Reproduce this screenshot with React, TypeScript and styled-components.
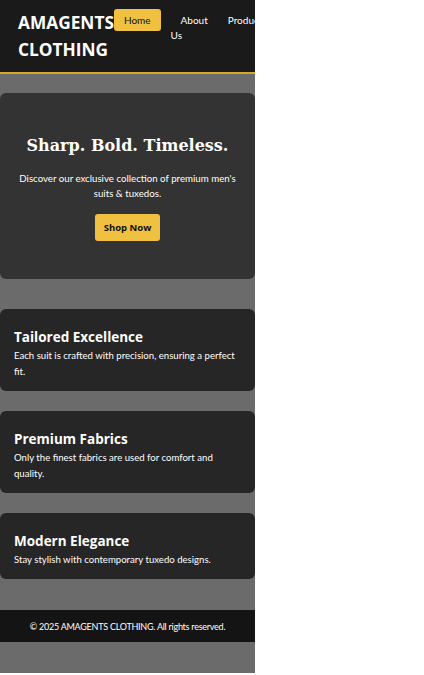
import React from "react";
import styled, { createGlobalStyle } from "styled-components";

const Global = createGlobalStyle`
  html, body { margin: 0; padding: 0; background: #ffffff; }
  body { font-family: Lato, "Open Sans", sans-serif; }
`;

const Page = styled.div`
  width: 255px;
  min-height: 673px;
  background: #6b6b6b;
  overflow: hidden;
  color: #ffffff;
  display: flex;
  flex-direction: column;
`;

const Header = styled.header`
  display: flex;
  align-items: flex-start;
  padding: 9px 0 9px 18px;
  background: #1a1a1a;
  border-bottom: 2px solid #d4a82c;
`;

const Logo = styled.h1`
  margin: 0;
  font-family: "Open Sans", sans-serif;
  font-size: 17.3px;
  line-height: 27px;
  font-weight: 700;
  color: #ffffff;
`;

const NavList = styled.ul`
  display: flex;
  gap: 10px;
  list-style: none;
  margin: 0;
  padding: 4px 0 0;
`;

const NavItem = styled.li`
  font-size: 10px;
  line-height: 15px;
`;

const NavLink = styled.a<{ $active?: boolean }>`
  padding: 5px 10px;
  border-radius: 3px;
  text-decoration: none;
  color: ${(p) => (p.$active ? "#111111" : "#ffffff")};
  background: ${(p) => (p.$active ? "#f0c040" : "transparent")};
`;

const Main = styled.main`
  display: flex;
  flex-direction: column;
  padding-top: 19px;
`;

const Hero = styled.section`
  display: flex;
  flex-direction: column;
  align-items: center;
  padding: 43px 16px 38px;
  background: #333333;
  border-radius: 6px;
  text-align: center;
  margin-bottom: 30px;
`;

const HeroTitle = styled.h2`
  margin: 0;
  font-family: "DejaVu Serif", Georgia, serif;
  font-size: 16px;
  line-height: 20px;
  font-weight: 700;
  color: #ffffff;
`;

const HeroText = styled.p`
  margin: 14.5px 0 0;
  font-size: 9.7px;
  line-height: 15px;
  color: #ffffff;
`;

const ShopButton = styled.button`
  margin-top: 13.5px;
  padding: 7px 9px;
  border: none;
  border-radius: 3px;
  background: #f0c040;
  color: #111111;
  font-family: "Open Sans", sans-serif;
  font-size: 9.5px;
  line-height: 13px;
  font-weight: 700;
`;

const FeatureList = styled.div`
  display: flex;
  flex-direction: column;
  gap: 20px;
`;

const Card = styled.article`
  padding: 18.5px 14px 11.5px;
  background: #262626;
  border-radius: 6px;
`;

const CardTitle = styled.h3`
  margin: 0 0 2px;
  font-family: "Open Sans", sans-serif;
  font-size: 13.5px;
  line-height: 18px;
  font-weight: 700;
  color: #ffffff;
`;

const CardText = styled.p`
  margin: 0;
  font-size: 9.6px;
  line-height: 16px;
  color: #ffffff;
`;

const Footer = styled.footer`
  margin-top: 31px;
  padding: 10px 0 9px;
  background: #141414;
  text-align: center;
  font-size: 9px;
  letter-spacing: -0.25px;
  line-height: 13px;
  color: #ffffff;
`;

const features = [
  { title: "Tailored Excellence", text: "Each suit is crafted with precision, ensuring a perfect fit." },
  { title: "Premium Fabrics", text: "Only the finest fabrics are used for comfort and quality." },
  { title: "Modern Elegance", text: "Stay stylish with contemporary tuxedo designs." },
];

const navItems = ["Home", "About Us", "Products", "Contact"];

export default function App() {
  return (
    <>
      <Global />
      <Page>
        <Header>
          <Logo>AMAGENTS CLOTHING</Logo>
          <nav>
            <NavList>
              {navItems.map((n, i) => (
                <NavItem key={n}>
                  <NavLink href="#" $active={i === 0}>{n}</NavLink>
                </NavItem>
              ))}
            </NavList>
          </nav>
        </Header>
        <Main>
          <Hero>
            <HeroTitle>Sharp. Bold. Timeless.</HeroTitle>
            <HeroText>Discover our exclusive collection of premium men's suits &amp; tuxedos.</HeroText>
            <ShopButton>Shop Now</ShopButton>
          </Hero>
          <FeatureList>
            {features.map((f) => (
              <Card key={f.title}>
                <CardTitle>{f.title}</CardTitle>
                <CardText>{f.text}</CardText>
              </Card>
            ))}
          </FeatureList>
        </Main>
        <Footer>© 2025 AMAGENTS CLOTHING. All rights reserved.</Footer>
      </Page>
    </>
  );
}
